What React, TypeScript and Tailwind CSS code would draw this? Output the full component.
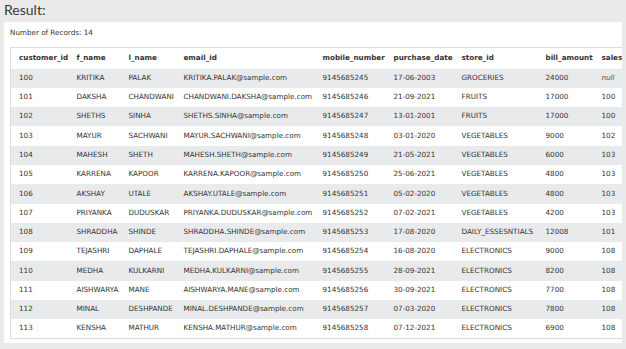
import React from "react";

const rows: string[][] = [
  ["100", "KRITIKA", "PALAK", "KRITIKA.PALAK@sample.com", "9145685245", "17-06-2003", "GROCERIES", "24000", "null"],
  ["101", "DAKSHA", "CHANDWANI", "CHANDWANI.DAKSHA@sample.com", "9145685246", "21-09-2021", "FRUITS", "17000", "100"],
  ["102", "SHETHS", "SINHA", "SHETHS.SINHA@sample.com", "9145685247", "13-01-2001", "FRUITS", "17000", "100"],
  ["103", "MAYUR", "SACHWANI", "MAYUR.SACHWANI@sample.com", "9145685248", "03-01-2020", "VEGETABLES", "9000", "102"],
  ["104", "MAHESH", "SHETH", "MAHESH.SHETH@sample.com", "9145685249", "21-05-2021", "VEGETABLES", "6000", "103"],
  ["105", "KARRENA", "KAPOOR", "KARRENA.KAPOOR@sample.com", "9145685250", "25-06-2021", "VEGETABLES", "4800", "103"],
  ["106", "AKSHAY", "UTALE", "AKSHAY.UTALE@sample.com", "9145685251", "05-02-2020", "VEGETABLES", "4800", "103"],
  ["107", "PRIYANKA", "DUDUSKAR", "PRIYANKA.DUDUSKAR@sample.com", "9145685252", "07-02-2021", "VEGETABLES", "4200", "103"],
  ["108", "SHRADDHA", "SHINDE", "SHRADDHA.SHINDE@sample.com", "9145685253", "17-08-2020", "DAILY_ESSESNTIALS", "12008", "101"],
  ["109", "TEJASHRI", "DAPHALE", "TEJASHRI.DAPHALE@sample.com", "9145685254", "16-08-2020", "ELECTRONICS", "9000", "108"],
  ["110", "MEDHA", "KULKARNI", "MEDHA.KULKARNI@sample.com", "9145685255", "28-09-2021", "ELECTRONICS", "8200", "108"],
  ["111", "AISHWARYA", "MANE", "AISHWARYA.MANE@sample.com", "9145685256", "30-09-2021", "ELECTRONICS", "7700", "108"],
  ["112", "MINAL", "DESHPANDE", "MINAL.DESHPANDE@sample.com", "9145685257", "07-03-2020", "ELECTRONICS", "7800", "108"],
  ["113", "KENSHA", "MATHUR", "KENSHA.MATHUR@sample.com", "9145685258", "07-12-2021", "ELECTRONICS", "6900", "108"],
];

const headers = ["customer_id", "f_name", "l_name", "email_id", "mobile_number", "purchase_date", "store_id", "bill_amount", "sales"];
const widths = ["w-[58px]", "w-[52px]", "w-[55px]", "w-[139px]", "w-[71px]", "w-[68px]", "w-[84px]", "w-[56px]", "w-[60px]"];

export default function App() {
  return (
    <div className="w-[626px] h-[349px] bg-[#eaeaea] overflow-hidden text-[#333]" style={{ fontFamily: "'DejaVu Sans', Verdana, sans-serif" }}>
      <div className="h-[22px] pl-[4px] pt-[1px] text-[14px] leading-[17px] text-[#3a3a3a]" style={{ fontFamily: "Lato, 'Open Sans', sans-serif" }}>
        Result:
      </div>
      <div className="ml-[4px] mr-[4px] h-[321px] bg-white overflow-hidden">
        <div className="h-[25px] pl-[6px] pt-[6px] text-[7.2px] leading-[9px]">Number of Records: 14</div>
        <div className="ml-[6px]">
          <table className="table-fixed border-collapse w-[643px] text-[7.2px]">
            <thead>
              <tr className="h-[21px] bg-white">
                {headers.map((h, i) => (
                  <th key={h} className={`${widths[i]} text-left font-bold pl-[8px] border-t border-[#dcdcdc] ${i === 0 ? "border-l" : ""}`}>
                    {h}
                  </th>
                ))}
              </tr>
            </thead>
            <tbody>
              {rows.map((r, ri) => (
                <tr key={ri} className={`h-[19.3px] ${ri % 2 === 0 ? "bg-[#e9eaec]" : "bg-white"}`}>
                  {r.map((c, ci) => (
                    <td
                      key={ci}
                      className={`pl-[8px] whitespace-nowrap border-[#dcdcdc] ${ci === 0 ? "border-l" : ""} ${ri === rows.length - 1 ? "border-b" : ""} ${c === "null" ? "italic text-[#555]" : ""}`}
                    >
                      {c}
                    </td>
                  ))}
                </tr>
              ))}
            </tbody>
          </table>
        </div>
      </div>
    </div>
  );
}
